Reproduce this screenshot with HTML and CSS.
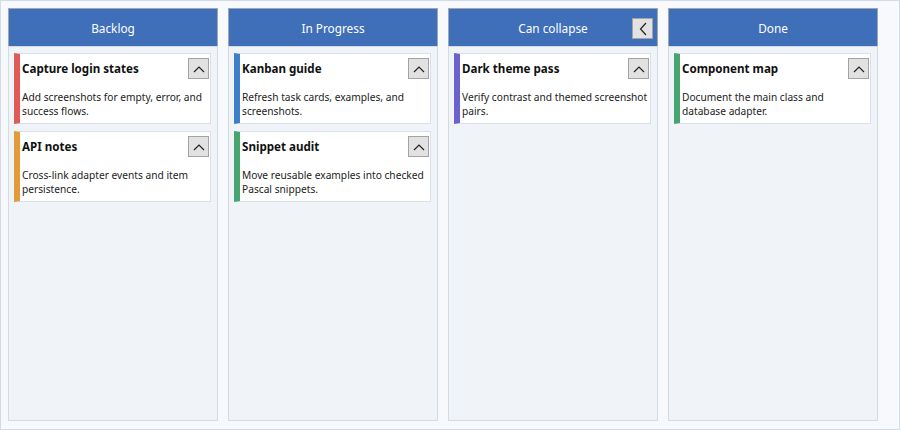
FILE: index.html
```html
<!DOCTYPE html>
<html>
<head>
<meta charset="utf-8">
<link rel="stylesheet" href="styles.css">
</head>
<body>
<div class="board">
  <section class="column">
    <header class="col-head"><span class="col-title">Backlog</span></header>
    <div class="col-body">
      <article class="card red">
        <div class="card-head"><span class="card-title">Capture login states</span><button class="tgl"><svg width="12" height="8" viewBox="0 0 12 8"><path d="M1 7 L6 2 L11 7" fill="none" stroke="#222" stroke-width="1.2"/></svg></button></div>
        <p class="card-text">Add screenshots for empty, error, and success flows.</p>
      </article>
      <article class="card orange">
        <div class="card-head"><span class="card-title">API notes</span><button class="tgl"><svg width="12" height="8" viewBox="0 0 12 8"><path d="M1 7 L6 2 L11 7" fill="none" stroke="#222" stroke-width="1.2"/></svg></button></div>
        <p class="card-text">Cross-link adapter events and item persistence.</p>
      </article>
    </div>
  </section>
  <section class="column">
    <header class="col-head"><span class="col-title">In Progress</span></header>
    <div class="col-body">
      <article class="card blue">
        <div class="card-head"><span class="card-title">Kanban guide</span><button class="tgl"><svg width="12" height="8" viewBox="0 0 12 8"><path d="M1 7 L6 2 L11 7" fill="none" stroke="#222" stroke-width="1.2"/></svg></button></div>
        <p class="card-text">Refresh task cards, examples, and screenshots.</p>
      </article>
      <article class="card green">
        <div class="card-head"><span class="card-title">Snippet audit</span><button class="tgl"><svg width="12" height="8" viewBox="0 0 12 8"><path d="M1 7 L6 2 L11 7" fill="none" stroke="#222" stroke-width="1.2"/></svg></button></div>
        <p class="card-text">Move reusable examples into checked Pascal snippets.</p>
      </article>
    </div>
  </section>
  <section class="column">
    <header class="col-head"><span class="col-title">Can collapse</span><button class="collapse"><svg width="8" height="14" viewBox="0 0 8 14"><path d="M7 1 L1.5 7 L7 13" fill="none" stroke="#222" stroke-width="1.2"/></svg></button></header>
    <div class="col-body">
      <article class="card purple">
        <div class="card-head"><span class="card-title">Dark theme pass</span><button class="tgl"><svg width="12" height="8" viewBox="0 0 12 8"><path d="M1 7 L6 2 L11 7" fill="none" stroke="#222" stroke-width="1.2"/></svg></button></div>
        <p class="card-text">Verify contrast and themed screenshot pairs.</p>
      </article>
    </div>
  </section>
  <section class="column">
    <header class="col-head"><span class="col-title">Done</span></header>
    <div class="col-body">
      <article class="card green">
        <div class="card-head"><span class="card-title">Component map</span><button class="tgl"><svg width="12" height="8" viewBox="0 0 12 8"><path d="M1 7 L6 2 L11 7" fill="none" stroke="#222" stroke-width="1.2"/></svg></button></div>
        <p class="card-text">Document the main class and database adapter.</p>
      </article>
    </div>
  </section>
</div>
</body>
</html>
```
FILE: styles.css
```css
* { box-sizing: border-box; }
html, body { margin: 0; padding: 0; }
body {
  width: 900px;
  height: 430px;
  font-family: "Noto Sans", "Open Sans", sans-serif;
  background: #f7f9fc;
}
.board {
  width: 900px;
  height: 430px;
  border: 1px solid #d3dbe5;
  background: #f7f9fc;
  padding: 7px 0 8px 7px;
  display: flex;
  gap: 10px;
}
.column {
  width: 210px;
  display: flex;
  flex-direction: column;
}
.col-head {
  height: 38px;
  background: #3e6fb8;
  border: 1px solid #9ea7b3;
  border-bottom: none;
  display: flex;
  align-items: center;
  justify-content: center;
  position: relative;
  color: #fff;
  font-size: 11.8px;
}
.col-title { margin-top: 1px; }
.collapse {
  position: absolute;
  right: 4px;
  top: 9px;
  width: 21px;
  height: 21px;
  padding: 0;
  background: #e2e2e2;
  border: 1px solid #a3a3a3;
  display: flex;
  align-items: center;
  justify-content: center;
}
.col-body {
  flex: 1;
  background: #f0f4f9;
  border: 1px solid #d3dbe5;
  padding: 6px 6px 6px 5px;
  display: flex;
  flex-direction: column;
  gap: 7px;
}
.card {
  background: #fff;
  border: 1px solid #d8e0ea;
  border-left: 6px solid #e05a57;
  padding: 4px 1px 5px 2px;
}
.card.red { border-left-color: #e05a57; }
.card.orange { border-left-color: #e39b3a; }
.card.blue { border-left-color: #3b80c8; }
.card.green { border-left-color: #45a46f; }
.card.purple { border-left-color: #6c62cf; }
.card-head {
  display: flex;
  align-items: center;
  justify-content: space-between;
  height: 21px;
}
.card-title {
  font-weight: bold;
  font-size: 11.6px;
  color: #111;
}
.tgl {
  width: 21px;
  height: 21px;
  padding: 0;
  background: #e2e2e2;
  border: 1px solid #a3a3a3;
  display: flex;
  align-items: center;
  justify-content: center;
}
.card-text {
  margin: 11px 0 0 0;
  font-size: 10.2px;
  line-height: 14px;
  color: #222;
}
```
